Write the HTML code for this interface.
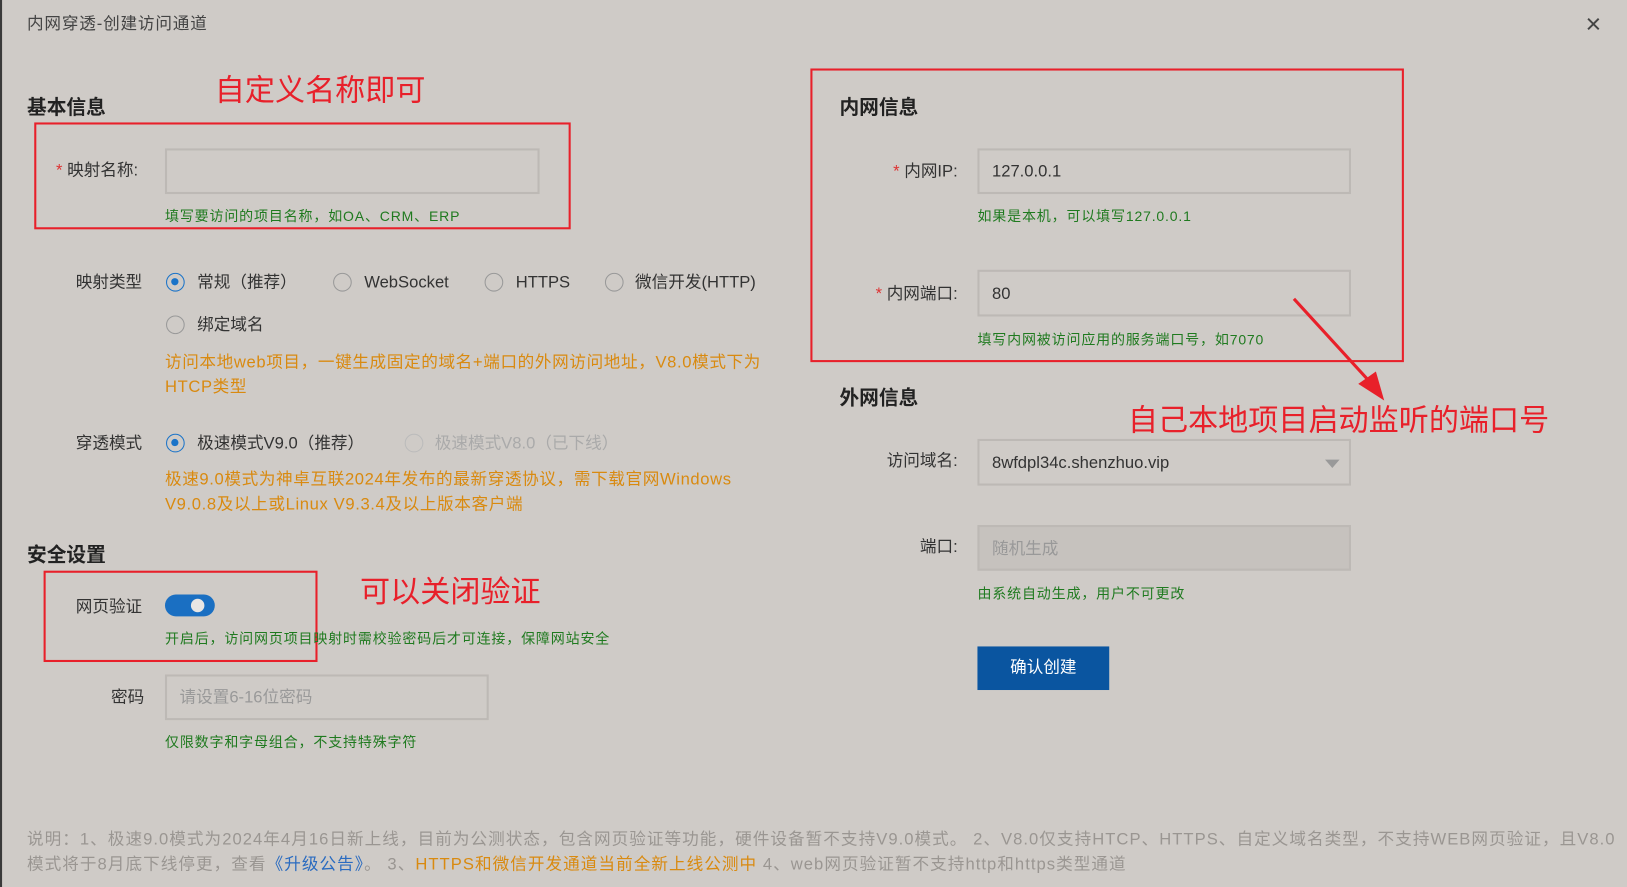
<!DOCTYPE html>
<html><head><meta charset="utf-8"><style>
html,body{margin:0;padding:0;width:1627px;height:887px;overflow:hidden;background:#cfcbc7}
#w{position:absolute;left:0;top:0;width:1568px;height:855px;transform:scale(1.03763);transform-origin:0 0;font-family:"Liberation Sans","Noto Sans CJK SC",sans-serif;color:#333;font-size:16px}
#w div,#w span.a{position:absolute;white-space:nowrap}
.t{line-height:20px;margin-top:2px}
.h{font-weight:bold;font-size:19px;color:#222;margin-top:1px}
.g{color:#1f7a1f;font-size:13.5px;letter-spacing:0.8px}
.o{color:#d98a10;font-size:16px;letter-spacing:0.6px}
.r{color:#e8202a;font-size:29px;line-height:36px}
.box{border:2px solid #e8202a}
.in{border:2px solid #bdb9b5;box-sizing:border-box}
.rad{width:18px;height:18px;border:1.5px solid #999;border-radius:50%;box-sizing:border-box}
.rad.on{border-color:#1a73c8}
.rad.on::after{content:"";position:absolute;left:4px;top:4px;width:7px;height:7px;border-radius:50%;background:#1a73c8}
.st{color:#d33}
.lab{text-align:right}
</style></head><body><div id="w">
<div style="left:0;top:0;width:2px;height:855px;background:#3a3a3a"></div>
<div class="t" style="left:26px;top:12px;color:#444;letter-spacing:0.8px">内网穿透-创建访问通道</div>
<div style="left:1528px;top:8px;font-size:26px;color:#444">×</div>

<div class="h" style="left:26px;top:88px">基本信息</div>
<div class="r" style="left:207px;top:70px">自定义名称即可</div>
<div class="box" style="left:33px;top:118px;width:513px;height:99px"></div>
<div class="t" style="left:54px;top:153px"><span class="st">*</span> 映射名称:</div>
<div class="in" style="left:159px;top:143px;width:361px;height:44px"></div>
<div class="g" style="left:159px;top:197px">填写要访问的项目名称，如OA、CRM、ERP</div>

<div class="t" style="left:73px;top:261px">映射类型</div>
<div class="rad on" style="left:160px;top:263px"></div><div class="t" style="left:190px;top:261px">常规（推荐）</div>
<div class="rad" style="left:321px;top:263px"></div><div class="t" style="left:351px;top:261px">WebSocket</div>
<div class="rad" style="left:467px;top:263px"></div><div class="t" style="left:497px;top:261px">HTTPS</div>
<div class="rad" style="left:583px;top:263px"></div><div class="t" style="left:612px;top:261px">微信开发(HTTP)</div>
<div class="rad" style="left:160px;top:304px"></div><div class="t" style="left:190px;top:302px">绑定域名</div>
<div class="o" style="left:159px;top:338px;line-height:24px">访问本地web项目，一键生成固定的域名+端口的外网访问地址，V8.0模式下为<br>HTCP类型</div>

<div class="t" style="left:73px;top:416px">穿透模式</div>
<div class="rad on" style="left:160px;top:418px"></div><div class="t" style="left:190px;top:416px">极速模式V9.0（推荐）</div>
<div class="rad" style="left:390px;top:418px;border-color:#bbb"></div><div class="t" style="left:419px;top:416px;color:#aaa">极速模式V8.0（已下线）</div>
<div class="o" style="left:159px;top:451px;line-height:24px">极速9.0模式为神卓互联2024年发布的最新穿透协议，需下载官网Windows<br>V9.0.8及以上或Linux V9.3.4及以上版本客户端</div>

<div class="h" style="left:26px;top:519px">安全设置</div>
<div class="box" style="left:42px;top:550px;width:260px;height:84px"></div>
<div class="r" style="left:347px;top:553px">可以关闭验证</div>
<div class="t" style="left:73px;top:574px">网页验证</div>
<div style="left:159px;top:573px;width:48px;height:21px;border-radius:11px;background:#1a6fc2"></div>
<div style="left:184px;top:577px;width:13px;height:13px;border-radius:50%;background:#e8e6e4"></div>
<div class="g" style="left:159px;top:604px">开启后，访问网页项目映射时需校验密码后才可连接，保障网站安全</div>
<div class="t" style="left:107px;top:661px">密码</div>
<div class="in" style="left:159px;top:650px;width:312px;height:44px"></div>
<div class="t" style="left:173px;top:661px;color:#999">请设置6-16位密码</div>
<div class="g" style="left:159px;top:704px">仅限数字和字母组合，不支持特殊字符</div>

<div class="box" style="left:781px;top:66px;width:568px;height:279px"></div>
<div class="h" style="left:809px;top:88px">内网信息</div>
<div class="t lab" style="left:823px;top:154px;width:100px"><span class="st">*</span> 内网IP:</div>
<div class="in" style="left:942px;top:143px;width:360px;height:44px"></div>
<div class="t" style="left:956px;top:154px">127.0.0.1</div>
<div class="g" style="left:942px;top:197px">如果是本机，可以填写127.0.0.1</div>
<div class="t lab" style="left:813px;top:272px;width:110px"><span class="st">*</span> 内网端口:</div>
<div class="in" style="left:942px;top:260px;width:360px;height:45px"></div>
<div class="t" style="left:956px;top:272px">80</div>
<div class="g" style="left:942px;top:316px">填写内网被访问应用的服务端口号，如7070</div>
<div class="h" style="left:809px;top:368px">外网信息</div>
<div class="r" style="left:1087px;top:388px">自己本地项目启动监听的端口号</div>
<div class="t lab" style="left:823px;top:433px;width:100px">访问域名:</div>
<div class="in" style="left:942px;top:423px;width:360px;height:45px"></div>
<div class="t" style="left:956px;top:435px">8wfdpl34c.shenzhuo.vip</div>
<div style="left:1277px;top:443px;width:0;height:0;border-left:7px solid transparent;border-right:7px solid transparent;border-top:8px solid #999"></div>
<div class="t lab" style="left:823px;top:516px;width:100px">端口:</div>
<div class="in" style="left:942px;top:506px;width:360px;height:44px;background:#c6c2be"></div>
<div class="t" style="left:956px;top:518px;color:#999">随机生成</div>
<div class="g" style="left:942px;top:561px">由系统自动生成，用户不可更改</div>
<div style="left:942px;top:623px;width:127px;height:42px;background:#0a55a0;color:#fff;text-align:center;line-height:42px">确认创建</div>

<svg style="position:absolute;left:0;top:0" width="1568" height="855"><line x1="1247" y1="288" x2="1322" y2="370" stroke="#e8202a" stroke-width="3"/><polygon points="1334,386 1309,370 1326,358" fill="#e8202a"/></svg>

<div style="left:26px;top:798px;line-height:24px;color:#9a9692;font-size:16px;letter-spacing:1px">说明：1、极速9.0模式为2024年4月16日新上线，目前为公测状态，包含网页验证等功能，硬件设备暂不支持V9.0模式。 2、V8.0仅支持HTCP、HTTPS、自定义域名类型，不支持WEB网页验证，且V8.0<br>模式将于8月底下线停更，查看<span style="color:#2a6bc0">《升级公告》</span>。 3、<span style="color:#d98a10">HTTPS和微信开发通道当前全新上线公测中</span> 4、web网页验证暂不支持http和https类型通道</div>
</div></body></html>
